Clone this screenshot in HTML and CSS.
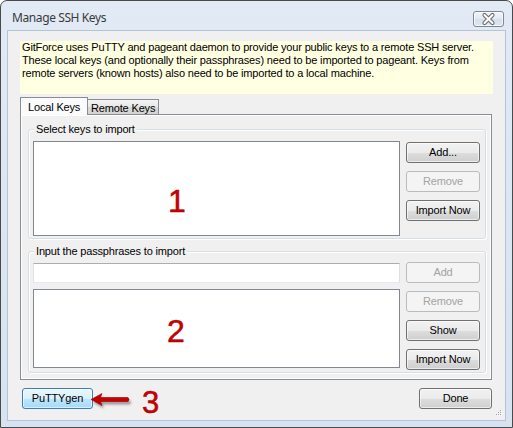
FILE: index.html
```html
<!DOCTYPE html>
<html>
<head>
<meta charset="utf-8">
<title>Manage SSH Keys</title>
<link rel="stylesheet" href="styles.css">
</head>
<body>
<div class="window">
  <div class="titlebar">
    <span class="title">Manage SSH Keys</span>
    <div class="close">
      <svg width="29" height="14" viewBox="0 0 29 14">
        <path d="M10.5 3 L18.5 11 M18.5 3 L10.5 11" stroke="#6b6f75" stroke-width="4.2" stroke-linecap="round"/>
        <path d="M10.5 3 L18.5 11 M18.5 3 L10.5 11" stroke="#ffffff" stroke-width="2" stroke-linecap="round"/>
      </svg>
    </div>
  </div>
  <div class="client">
    <div class="info">GitForce uses PuTTY and pageant daemon to provide your public keys to a remote SSH server.<br>These local keys (and optionally their passphrases) need to be imported to pageant. Keys from<br>remote servers (known hosts) also need to be imported to a local machine.</div>
    <div class="tabs">
      <div class="tab active">Local Keys</div>
      <div class="tab">Remote Keys</div>
    </div>
    <div class="panel">
      <div class="group g1">
        <span class="caption">Select keys to import</span>
        <div class="list l1"><span class="mark m1">1</span></div>
        <div class="btns b1">
          <button class="btn">Add...</button>
          <button class="btn" disabled>Remove</button>
          <button class="btn">Import Now</button>
        </div>
      </div>
      <div class="group g2">
        <span class="caption">Input the passphrases to import</span>
        <div class="col">
          <div class="input"></div>
          <div class="list l2"><span class="mark m2">2</span></div>
        </div>
        <div class="btns b2">
          <button class="btn" disabled>Add</button>
          <button class="btn" disabled>Remove</button>
          <button class="btn">Show</button>
          <button class="btn">Import Now</button>
        </div>
      </div>
    </div>
    <div class="footer">
      <button class="btn focus">PuTTYgen</button>
      <svg class="arrow" width="48" height="24" viewBox="0 0 48 24">
        <defs>
          <filter id="blur" x="-20%" y="-50%" width="140%" height="200%">
            <feGaussianBlur stdDeviation="1.3"/>
          </filter>
        </defs>
        <path transform="translate(2 3)" d="M2 12.5 L13 6.5 L11.5 10.5 L39 10.5 Q41 12.5 39 14.5 L11.5 14.5 L13 18.5 Z" fill="#555" opacity="0.55" filter="url(#blur)"/>
        <path d="M2 12.5 L13 6.5 L11.5 10.5 L39 10.5 Q41 12.5 39 14.5 L11.5 14.5 L13 18.5 Z" fill="#c40000" stroke="#9a0000" stroke-width="0.6"/>
      </svg>
      <span class="mark m3">3</span>
      <button class="btn done">Done</button>
    </div>
    <svg class="grip" width="8" height="8" viewBox="0 0 8 8">
      <g fill="#ffffff">
        <rect x="6" y="1" width="1" height="1"/>
        <rect x="4" y="3" width="1" height="1"/><rect x="6" y="3" width="1" height="1"/>
        <rect x="2" y="5" width="1" height="1"/><rect x="4" y="5" width="1" height="1"/><rect x="6" y="5" width="1" height="1"/>
      </g>
      <g fill="#a3a8b0">
        <rect x="5" y="0" width="1" height="1"/>
        <rect x="3" y="2" width="1" height="1"/><rect x="5" y="2" width="1" height="1"/>
        <rect x="1" y="4" width="1" height="1"/><rect x="3" y="4" width="1" height="1"/><rect x="5" y="4" width="1" height="1"/>
      </g>
    </svg>
  </div>
</div>
</body>
</html>
```

FILE: styles.css
```css
* {
  box-sizing: border-box;
}

html, body {
  margin: 0;
  padding: 0;
  background: #ffffff;
}

body {
  font-family: "Liberation Sans", Arial, sans-serif;
  font-size: 11px;
  letter-spacing: -0.16px;
  color: #000;
}

.window {
  width: 513px;
  height: 428px;
  border: 1px solid #4a4a4a;
  border-radius: 7px 7px 0 0;
  background: linear-gradient(#e1eaf5, #d7e3f1);
  display: flex;
  flex-direction: column;
  overflow: hidden;
}

.titlebar {
  height: 29px;
  flex: none;
  display: flex;
  justify-content: space-between;
  align-items: flex-start;
  padding: 0 8px 0 11px;
}

.title {
  font-family: "Noto Sans", "Open Sans", sans-serif;
  font-size: 12px;
  letter-spacing: -0.4px;
  line-height: 16px;
  color: #3a3a3a;
  margin-top: 9px;
}

.close {
  margin-top: 10px;
  width: 31px;
  height: 16px;
  border: 1px solid #7d8896;
  border-radius: 3px;
  background: linear-gradient(#f3f6fa, #e2e8f0 50%, #d6dee9 51%, #dfe6ef);
  box-shadow: inset 0 0 0 1px rgba(255, 255, 255, 0.7);
  display: flex;
  align-items: center;
  justify-content: center;
}

.client {
  position: relative;
  margin: 0 6px;
  height: 391px;
  flex: none;
  border: 1px solid #b4c3d5;
  background: #f0f0f0;
  display: flex;
  flex-direction: column;
  padding: 10px 12px 0 12px;
}

.info {
  height: 53px;
  background: #ffffe1;
  padding: 0 2px;
  line-height: 13px;
  white-space: nowrap;
}

.tabs {
  position: relative;
  z-index: 1;
  margin-top: 3px;
  height: 17px;
  display: flex;
  align-items: flex-end;
}

.tab {
  width: 71px;
  height: 15px;
  border: 1px solid #898c95;
  border-left: none;
  border-bottom: none;
  background: linear-gradient(#f3f3f3, #e8e8e8 50%, #dadada 51%, #d3d3d3);
  padding: 2px 0 0 3px;
  line-height: 13px;
}

.tab.active {
  width: 68px;
  height: 18px;
  margin-bottom: -1px;
  border-left: 1px solid #898c95;
  background: #fbfbfb;
  padding: 3px 0 0 7px;
}

.panel {
  height: 266px;
  margin-right: 1px;
  border: 1px solid #898c95;
  box-shadow: inset 1px 1px 0 #ffffff, inset -1px -1px 0 #ffffff;
  background: #f0f0f0;
  display: flex;
  flex-direction: column;
  gap: 12px;
  padding: 14px 5px 6px 7px;
}

.group {
  position: relative;
  display: flex;
  border: 1px solid #d5dfe5;
  border-radius: 3px;
  box-shadow: inset 1px 1px 0 #ffffff, 1px 1px 0 #ffffff;
  padding-left: 4px;
  padding-right: 5px;
}

.g1 {
  height: 110px;
  padding-top: 11px;
  padding-bottom: 2px;
}

.g2 {
  height: 122px;
  padding-top: 10px;
  padding-bottom: 4px;
}

.caption {
  position: absolute;
  top: -7px;
  left: 5px;
  padding: 0 2px;
  line-height: 13px;
  background: #f0f0f0;
}

.list {
  position: relative;
  width: 367px;
  border: 1px solid #828790;
  background: #ffffff;
}

.l1 {
  height: 95px;
}

.l2 {
  height: 79px;
}

.col {
  display: flex;
  flex-direction: column;
  gap: 6px;
  margin-top: 1px;
}

.input {
  width: 367px;
  height: 20px;
  border: 1px solid;
  border-color: #abadb3 #dbdfe6 #e3e9ef #e2e3ea;
  background: #ffffff;
}

.btns {
  margin-left: 6px;
  display: flex;
  flex-direction: column;
  gap: 8px;
}

.b1 {
  margin-top: 1px;
}

.btn {
  width: 74px;
  height: 21px;
  padding: 0;
  margin: 0;
  border: 1px solid #707070;
  border-radius: 3px;
  background: linear-gradient(#f2f2f2, #ebebeb 50%, #dddddd 51%, #cfcfcf);
  box-shadow: inset 0 0 0 1px rgba(255, 255, 255, 0.6);
  font-family: "Liberation Sans", Arial, sans-serif;
  font-size: 11px;
  letter-spacing: -0.16px;
  line-height: 19px;
  color: #000;
  text-align: center;
}

.btn:disabled {
  border-color: #b8bcbf;
  background: #f4f4f4;
  box-shadow: none;
  color: #a3a3a3;
}

.footer {
  position: relative;
  margin-top: 8px;
  height: 21px;
  display: flex;
  justify-content: space-between;
  padding: 0 1px 0 2px;
}

.btn.focus {
  width: 71px;
  border-color: #3c7fb1;
  background: linear-gradient(#eaf6fd, #d9f0fc 50%, #bee6fd 51%, #a7d9f5);
  box-shadow: inset 0 0 0 1px rgba(255, 255, 255, 0.55);
}

.btn.done {
  width: 73px;
}

.mark {
  position: absolute;
  font-family: "Liberation Sans", Arial, sans-serif;
  font-size: 32px;
  letter-spacing: 0;
  line-height: 1;
  color: #c80000;
  -webkit-text-stroke: 0.5px #a80000;
}

.m1 {
  left: 134px;
  top: 43px;
}

.m2 {
  left: 133px;
  top: 25px;
}

.m3 {
  font-size: 31px;
  left: 122px;
  top: -1px;
}

.arrow {
  position: absolute;
  left: 69px;
  top: -1px;
}

.grip {
  position: absolute;
  right: 2px;
  bottom: 2px;
}
```
